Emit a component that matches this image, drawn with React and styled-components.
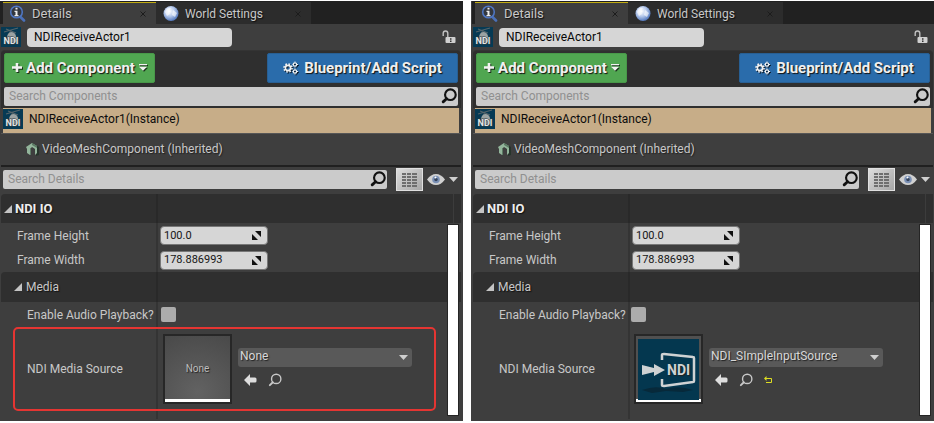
import React, { useId } from "react";
import styled, { createGlobalStyle } from "styled-components";

const GlobalStyle = createGlobalStyle`
  *, *::before, *::after { box-sizing: border-box; }
  body { margin: 0; background: #fff; }
  button, input, select { font: inherit; color: inherit; margin: 0; border: 0; padding: 0; background: none; }
  svg { display: block; flex: none; }
`;

const Page = styled.main`
  display: grid;
  grid-template-columns: 1fr 1fr;
  gap: 8px;
  padding: 1px 0 2px;
  font: 12px/16px Roboto, "Liberation Sans", sans-serif;
  color: #c8c8c8;
`;

const Panel = styled.section`
  display: flex;
  flex-direction: column;
  min-width: 0;
  padding: 0 ${(p) => (p.$second ? 1 : 2)}px 0 ${(p) => (p.$second ? 2 : 1)}px;
  background: #3e3e3e;
`;

const TabStrip = styled.div`
  display: flex;
  align-items: flex-end;
  height: 23px;
  margin: 0 -2px 0 -1px;
  padding-left: 3px;
  background: #212121;
`;

const Tab = styled.div`
  display: flex;
  align-items: center;
  width: ${(p) => (p.$active ? 153 : 155)}px;
  height: 22px;
  padding: 0 7px 0 6px;
  border-top: 1px solid ${(p) => (p.$active ? "#c3ad12" : "#2c2c2c")};
  background: ${(p) => (p.$active ? "#3e3e3e" : "#2c2c2c")};
`;

const TabButton = styled.button`
  display: flex;
  flex: 1;
  align-items: center;
  gap: 6px;
  font-size: ${(p) => (p.$active ? 13 : 12)}px;
  text-align: left;
  text-shadow: 1px 1px 1px #111;
`;

const CloseButton = styled.button`
  display: grid;
  place-items: center;
  width: 12px;
  height: 16px;
`;

const NameBar = styled.div`
  display: flex;
  align-items: center;
  height: 26px;
  padding-right: 5px;
`;

const NameInput = styled.input`
  width: 205px;
  height: 19px;
  margin: 0 auto 0 6px;
  padding: 0 7px;
  border-radius: 4px;
  background: #d6d6d6;
  color: #080808;
`;

const Components = styled.div`
  display: flex;
  flex-direction: column;
  gap: 4px;
  padding: 2px 3px;
  border-top: 1px solid #343434;
  border-radius: 4px 4px 0 0;
  background: #2f2f2f;
`;

const ButtonBar = styled.div`
  display: flex;
  justify-content: space-between;
`;

const ActionButton = styled.button`
  display: flex;
  align-items: center;
  justify-content: center;
  gap: ${(p) => (p.$tone === "green" ? 4 : 6)}px;
  width: ${(p) => (p.$tone === "green" ? 151 : 191)}px;
  height: 30px;
  padding-bottom: 1px;
  border: 1px solid ${(p) => (p.$tone === "green" ? "#489849" : "#285f93")};
  border-radius: 2px;
  background: ${(p) => (p.$tone === "green" ? "#50a651" : "#2a6cab")};
  color: #f0f0f0;
  font-size: 15px;
  font-weight: 700;
  white-space: nowrap;
  text-shadow: 1px 1px 1px #111;

  svg { filter: drop-shadow(1px 1px 0 rgba(0, 0, 0, 0.7)); }
`;

const SearchBox = styled.label`
  display: flex;
  flex: ${(p) => (p.$grow ? 1 : "none")};
  align-items: center;
  height: 19px;
  padding: 0 1px 1px 5px;
  border-radius: 2px;
  background: #cbcbcb;
  color: #111;

  input { flex: 1; min-width: 0; outline: none; }
  input::placeholder { color: #909090; opacity: 1; }
`;

const Tree = styled.div`
  display: flex;
  flex-direction: column;
  height: 59px;
  border-bottom: 2px solid #202020;
  background: #3e3e3e;
`;

const TreeRow = styled.button`
  display: flex;
  align-items: center;
  gap: ${(p) => (p.$root ? 6 : 2)}px;
  height: ${(p) => (p.$root ? 25 : 32)}px;
  margin: ${(p) => (p.$root ? "0 2px" : 0)};
  padding-left: ${(p) => (p.$root ? 0 : 25)}px;
  padding-bottom: ${(p) => (p.$root ? 3 : 1)}px;
  border-top: ${(p) => (p.$root ? "none" : "1px solid #565656")};
  background: ${(p) => (p.$root ? "#c7ad88" : "transparent")};
  color: ${(p) => (p.$root ? "#0c0c0c" : "#c8c8c8")};
  text-align: left;
  text-shadow: ${(p) => (p.$root ? "none" : "1px 1px 1px #222")};
`;

const Toolbar = styled.div`
  display: flex;
  align-items: center;
  height: 27px;
  padding: 0 3px 2px 2px;
`;

const GridButton = styled.button`
  display: grid;
  place-items: center;
  width: 27px;
  height: 23px;
  margin: 0 4px 0 9px;
  border: 1px solid #e0e0e0;
  background: linear-gradient(135deg, #dcdcdc, #a6a6a6);
`;

const EyeButton = styled.button`
  display: flex;
  align-items: center;
  gap: 4px;
`;

const Details = styled.div`
  position: relative;
  padding-bottom: 2px;

  &::after {
    content: "";
    display: block;
    height: 8px;
    margin-left: 155px;
    border-left: 2px solid #343434;
  }
`;

const ScrollThumb = styled.div`
  position: absolute;
  top: 30px;
  right: 2px;
  bottom: 5px;
  width: 12px;
  border: 1px solid #252525;
  background: #fff;
`;

const Category = styled.div`
  display: grid;
  grid-template-columns: 155px 1fr;
  height: ${(p) => (p.$top ? 29 : 30)}px;
  border-radius: 4px 0 0 0;
  background: #2f2f2f;

  &::after {
    content: "";
    margin-right: 7px;
    border-left: 2px solid #292929;
    border-right: 1px solid ${(p) => (p.$top ? "#3c3c3c" : "transparent")};
  }
`;

const CategoryButton = styled.button`
  display: flex;
  align-items: center;
  gap: ${(p) => (p.$top ? 3 : 4)}px;
  padding-left: ${(p) => (p.$top ? 3 : 13)}px;
  color: ${(p) => (p.$top ? "#eee" : "#c8c8c8")};
  font-size: ${(p) => (p.$top ? 13 : 12)}px;
  font-weight: ${(p) => (p.$top ? 700 : 400)};
  text-shadow: 1px 1px 1px #111;
`;

const Property = styled.div`
  position: relative;
  display: grid;
  grid-template-columns: 155px 1fr;
  height: ${(p) => p.$height}px;
`;

const PropertyLabel = styled.label`
  display: flex;
  align-items: center;
  padding-left: ${(p) => (p.$nested ? 26 : 16)}px;
  white-space: nowrap;
`;

const Value = styled.div`
  display: flex;
  align-items: center;
  gap: 6px;
  padding-left: ${(p) => p.$pad}px;
  border-left: 2px solid #343434;
`;

const NumberField = styled.div`
  display: flex;
  align-items: center;
  width: 108px;
  height: 19px;
  padding: 0 6px 0 3px;
  border: 1px solid #777;
  border-radius: 4px;
  background: #d6d6d6;
  color: #151515;
  font-size: 11px;

  input { flex: 1; min-width: 0; }
`;

const CheckBox = styled.input`
  appearance: none;
  width: 15px;
  height: 15px;
  border-radius: 2px;
  background: #acacac;

  &:checked { background: #e0a030; }
`;

const Thumbnail = styled.div`
  display: grid;
  place-items: center;
  width: 69px;
  height: 70px;
  border: 2px solid #272727;
  background: ${(p) => (p.$filled ? "#505050" : "radial-gradient(circle at 50% 85%, #626262, #494949)")};
  box-shadow: inset 0 -3px #fff;
  color: #bdbdbd;
  font-size: 10px;
  text-shadow: 1px 1px 1px #222;
`;

const AssetTools = styled.div`
  display: flex;
  flex-direction: column;
  gap: 6px;
  padding-bottom: 4px;
`;

const SelectWrap = styled.div`
  display: grid;
  align-items: center;

  > * { grid-area: 1 / 1; }
  > svg { justify-self: end; margin-right: 4px; pointer-events: none; }
`;

const AssetSelect = styled.select`
  appearance: none;
  width: 174px;
  height: 19px;
  padding: 0 18px 2px 2px;
  border-radius: 3px;
  background: #595959;
  color: #d8d8d8;
  text-shadow: 1px 1px 1px #222;
`;

const ToolRow = styled.div`
  display: flex;
  align-items: center;
  gap: 11px;
  padding-left: 6px;
`;

const ToolButton = styled.button`
  display: grid;
  place-items: center;
  height: 14px;
`;

const Highlight = styled.div`
  position: absolute;
  inset: 0 25px 0 12px;
  border: 2px solid #e53532;
  border-radius: 5px;
  pointer-events: none;
`;

const InfoIcon = () => (
  <svg width="17" height="17" viewBox="0 0 17 17">
    <path d="M11 11.500l4 4" stroke="#4a70b8" strokeWidth="2.600" strokeLinecap="round" />
    <circle cx="7.500" cy="7" r="5.800" fill="#33373e" stroke="#4f76c2" strokeWidth="1.600" />
    <path d="M6.500 2.800h2v1.800h-2zM5.500 5.800h3V10h1v1.300h-4V10h1V7.100h-1z" fill="#ededed" />
  </svg>
);

const GlobeIcon = () => (
  <svg width="17" height="17" viewBox="0 0 17 17">
    <defs>
      <radialGradient id="globe" cx="40%" cy="35%" r="65%">
        <stop offset="0" stopColor="#fff" /><stop offset=".5" stopColor="#b9cbed" /><stop offset="1" stopColor="#5479bd" />
      </radialGradient>
    </defs>
    <circle cx="9" cy="8.500" r="7.500" fill="url(#globe)" />
    <path d="M3 7q2-5 6-4l-2 3 1 3-3 2zM11 5l4 3-2 4-3-2z" fill="#fff" opacity=".6" />
  </svg>
);

const CrossIcon = () => (
  <svg width="6" height="6" viewBox="0 0 6 6"><path d="M.5.5l5 5m0-5l-5 5" stroke="#1c1c1c" /></svg>
);

const ActorIcon = () => (
  <svg width="20" height="20" viewBox="0 0 20 20">
    <path fill="#063a54" d="M0 0h20v20H0z" />
    <path d="M3 5l7-2 7-2M5 2l5 2 5 2M10 3L8 7" fill="none" stroke="#55646a" strokeWidth="1.200" />
    <path d="M6 11q0-5 4-6 4 0 5 4l1 5-5 3-4-2z" fill="#9aa2a2" />
    <text x="10" y="17" textAnchor="middle" fontFamily="Roboto" fontWeight="700" fontSize="9" fill="#e2e5e5" stroke="#2a3a40" strokeWidth="1" paintOrder="stroke">NDI</text>
  </svg>
);

const LockIcon = () => (
  <svg width="14" height="14" viewBox="0 0 14 14">
    <path d="M1.200 6V3.300Q1.200 1 3.500 1t2.300 2.300V7" fill="none" stroke="#c0c0c0" strokeWidth="1.400" />
    <rect x="3.500" y="7" width="10" height="6" rx="1" fill="#d0d0d0" />
    <path d="M8 8.200h1.500v1.500H8zM8 10.500h1.500V12H8z" fill="#333" />
  </svg>
);

const PlusIcon = () => (
  <svg width="10" height="11" viewBox="0 0 10 11"><path d="M5 1v9M0 5.500h10" stroke="#f2f2f2" strokeWidth="2.600" /></svg>
);

const MenuIcon = () => (
  <svg width="8" height="7" viewBox="0 0 8 7"><path d="M0 0h8v1.300H0zM0 2.800h8L4 6.800z" fill="#f2f2f2" /></svg>
);

const GearsIcon = () => (
  <svg width="15" height="14" viewBox="0 0 15 14" fill="none" stroke="#f2f2f2">
    <circle cx="5" cy="7" r="4" strokeWidth="1.600" strokeDasharray="1.600 1.540" />
    <circle cx="5" cy="7" r="2.600" strokeWidth="1.600" />
    <circle cx="12" cy="3.500" r="1.700" strokeWidth="1.200" />
    <circle cx="12" cy="10.500" r="1.700" strokeWidth="1.200" />
    <path d="M12 .5v1M12 5.500v1M12 7.500v1M12 12.500v1M9.500 3.500h.5M14 3.500h1M9.500 10.500h.5M14 10.500h1" />
  </svg>
);

const SearchIcon = ({ size = 15, width = 2 }) => (
  <svg width={size} height={size} viewBox="0 0 15 15" fill="none" stroke="currentColor">
    <circle cx="8.800" cy="6.300" r="5" strokeWidth={width} />
    <path d="M5.200 10L2 13" strokeWidth={width + 0.6} strokeLinecap="round" />
  </svg>
);

const MeshIcon = () => (
  <svg width="14" height="14" viewBox="0 0 14 14">
    <path d="M6 1l7 4v8l-3 1V8L7 6z" fill="#26342b" />
    <path d="M0 5l6-4 5 3v7l-2 2V7L6 5 4 7v6l-3-2V7z" fill="#93b59b" />
    <path d="M6 1l5 3v2L6 3zM4 7l1-1v7H4z" fill="#5b7a64" />
  </svg>
);

const MatrixIcon = () => (
  <svg width="15" height="16" viewBox="0 0 15 16" stroke="#6e6e6e" strokeWidth="2">
    <path d="M0 2h15M0 5h15M0 8h15M0 11h15M0 14h15" strokeDasharray="4 1 4 1 5 0" />
  </svg>
);

const EyeIcon = () => (
  <svg width="18" height="13" viewBox="0 0 18 13">
    <path d="M0 6.500Q4 1 9 1t9 5.500Q14 12 9 12T0 6.500z" fill="#d0d0d0" />
    <circle cx="9" cy="6.500" r="3.800" fill="#7a90b5" /><circle cx="9" cy="6.500" r="1.700" fill="#34435c" /><circle cx="8.500" cy="4.500" r="1" fill="#fff" />
  </svg>
);

const DownIcon = () => (
  <svg width="9" height="5" viewBox="0 0 9 5"><path d="M0 0h9L4.500 5z" fill="#cfcfcf" /></svg>
);

const ExpandedIcon = () => (
  <svg width="8" height="8" viewBox="0 0 8 8"><path d="M8 0v8H0z" fill="#c4c4c4" /></svg>
);

const SpinIcon = () => (
  <svg width="9" height="9" viewBox="0 0 9 9"><path d="M3 0h6v6zM0 3v6h6z" fill="#111" /></svg>
);

const ArrowIcon = () => (
  <svg width="13" height="12" viewBox="0 0 13 12"><path d="M0 6l6-6v3.500h5q1.500 0 1.500 1.500v2q0 1.500-1.500 1.500H6V12z" fill="#dedede" /></svg>
);

const ResetIcon = () => (
  <svg width="9" height="8" viewBox="0 0 9 8"><path d="M2 2.500h5.500v4H2" fill="none" stroke="#dede22" /><path d="M0 2.500L2.500 0v5z" fill="#dede22" /></svg>
);

const SourceArt = () => (
  <svg width="61" height="61" viewBox="0 0 61 61">
    <path fill="#04374f" d="M0 0h61v61H0z" />
    <path d="M4 51q14-5 24-1 12-4 27 1l-10 2-17-1-14 2z" fill="#07293a" />
    <path d="M24 21v-5q0-1 2-1l29 3q1 0 1 1v23q0 1-1 1l-29 4q-2 0-2-1v-6" fill="none" stroke="#cfd2d3" strokeWidth="2.500" />
    <path d="M4 26l12 3v-4l11 6-11 6v-4L4 36z" fill="#cfd2d3" />
    <text x="29" y="36" fontFamily="Roboto" fontWeight="700" fontSize="14" fill="#cfd2d3">NDI</text>
  </svg>
);

function NumberProperty({ label, value, height }) {
  const id = useId();
  return (
    <Property $height={height}>
      <PropertyLabel htmlFor={id}>{label}</PropertyLabel>
      <Value $pad={2}>
        <NumberField><input id={id} defaultValue={value} /><SpinIcon /></NumberField>
      </Value>
    </Property>
  );
}

function DetailsPanel({ second, source, highlighted }) {
  const id = useId();
  const assigned = source !== "None";
  return (
    <Panel $second={second} aria-label="Details">
      <TabStrip>
        <Tab $active>
          <TabButton $active><InfoIcon />Details</TabButton>
          <CloseButton aria-label="Close Details"><CrossIcon /></CloseButton>
        </Tab>
        <Tab>
          <TabButton><GlobeIcon />World Settings</TabButton>
          <CloseButton aria-label="Close World Settings"><CrossIcon /></CloseButton>
        </Tab>
      </TabStrip>
      <NameBar>
        <ActorIcon />
        <NameInput aria-label="Actor name" defaultValue="NDIReceiveActor1" />
        <button aria-label="Lock selection"><LockIcon /></button>
      </NameBar>
      <Components>
        <ButtonBar>
          <ActionButton $tone="green"><PlusIcon />Add Component<MenuIcon /></ActionButton>
          <ActionButton $tone="blue"><GearsIcon />Blueprint/Add Script</ActionButton>
        </ButtonBar>
        <SearchBox>
          <input aria-label="Search Components" placeholder="Search Components" />
          <SearchIcon size={16} />
        </SearchBox>
      </Components>
      <Tree>
        <TreeRow $root><ActorIcon />NDIReceiveActor1(Instance)</TreeRow>
        <TreeRow><MeshIcon />VideoMeshComponent (Inherited)</TreeRow>
      </Tree>
      <Toolbar>
        <SearchBox $grow>
          <input aria-label="Search Details" placeholder="Search Details" />
          <SearchIcon size={16} />
        </SearchBox>
        <GridButton aria-label="Property matrix"><MatrixIcon /></GridButton>
        <EyeButton aria-label="View options"><EyeIcon /><DownIcon /></EyeButton>
      </Toolbar>
      <Details>
        <Category $top><CategoryButton $top><ExpandedIcon />NDI IO</CategoryButton></Category>
        <NumberProperty label="Frame Height" value="100.0" height={25} />
        <NumberProperty label="Frame Width" value="178.886993" height={24} />
        <Category><CategoryButton><ExpandedIcon />Media</CategoryButton></Category>
        <Property $height={25}>
          <PropertyLabel $nested htmlFor={id + "audio"}>Enable Audio Playback?</PropertyLabel>
          <Value $pad={second ? 1 : 3}><CheckBox id={id + "audio"} type="checkbox" /></Value>
        </Property>
        <Property $height={84}>
          <PropertyLabel $nested htmlFor={id + "source"}>NDI Media Source</PropertyLabel>
          <Value $pad={second ? 4 : 5}>
            <Thumbnail $filled={assigned}>{assigned ? <SourceArt /> : "None"}</Thumbnail>
            <AssetTools>
              <SelectWrap>
                <AssetSelect id={id + "source"} defaultValue={source}><option>{source}</option></AssetSelect>
                <DownIcon />
              </SelectWrap>
              <ToolRow>
                <ToolButton aria-label="Use selected asset"><ArrowIcon /></ToolButton>
                <ToolButton aria-label="Browse to asset"><SearchIcon size={14} width={1.5} /></ToolButton>
                {assigned && <ToolButton aria-label="Reset to default"><ResetIcon /></ToolButton>}
              </ToolRow>
            </AssetTools>
          </Value>
          {highlighted && <Highlight />}
        </Property>
        <ScrollThumb />
      </Details>
    </Panel>
  );
}

export default function App() {
  return (
    <>
      <GlobalStyle />
      <Page>
        <DetailsPanel source="None" highlighted />
        <DetailsPanel source="NDI_SImpleInputSource" second />
      </Page>
    </>
  );
}
